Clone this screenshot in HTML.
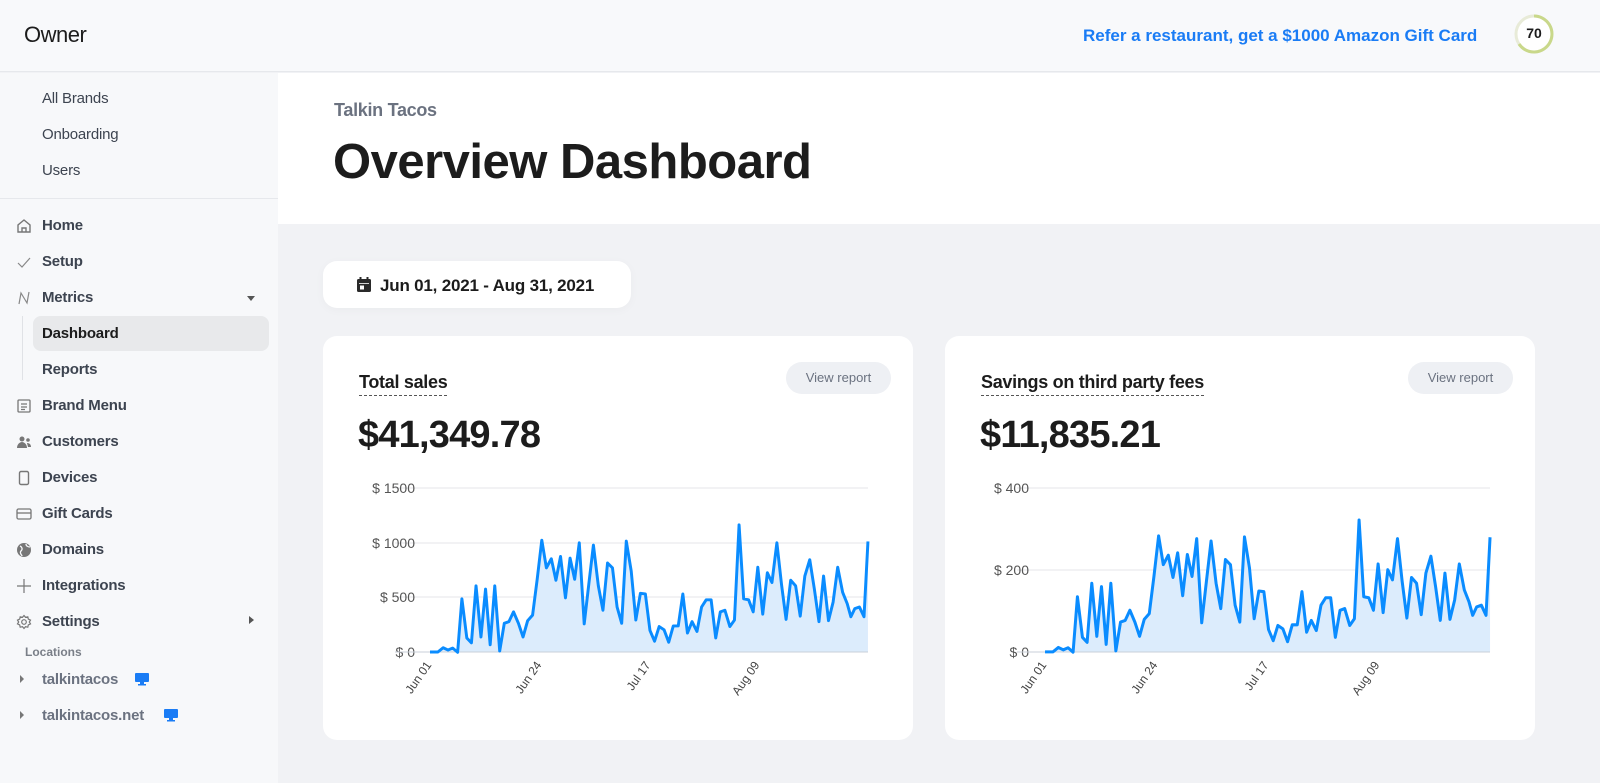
<!DOCTYPE html>
<html><head><meta charset="utf-8"><style>
*{margin:0;padding:0;box-sizing:border-box}
body{width:1600px;height:783px;background:#f1f2f5;font-family:"Liberation Sans",sans-serif;position:relative;overflow:hidden;color:#1c1c1c}
.a{position:absolute;white-space:nowrap}
.nav{position:absolute;left:42px;font-size:15px;color:#3d4450;font-weight:bold;letter-spacing:-0.2px}
.ic{position:absolute;left:16px;width:16px;height:16px}
.card{position:absolute;top:336px;width:590px;height:404px;background:#fff;border-radius:14px}
.vr{position:absolute;top:26px;right:22px;width:105px;height:32px;border-radius:16px;background:#eef0f4;color:#6b7280;font-size:13px;line-height:32px;text-align:center}
.ct{position:absolute;left:36px;top:36px;font-size:18px;font-weight:bold;border-bottom:1px dashed #555;padding-bottom:2px;letter-spacing:-0.3px}
.big{position:absolute;left:35px;top:78px;font-size:38px;font-weight:bold;letter-spacing:-0.8px}
</style></head><body>
<div class="a" style="left:0;top:0;width:1600px;height:72px;background:#f8f9fb;border-bottom:1px solid #e6e8ec"></div>
<div class="a" style="left:24px;top:22px;font-size:22px;color:#1c1c1c;letter-spacing:-0.5px">Owner</div>
<div class="a" style="left:1083px;top:26px;font-size:17px;font-weight:bold;color:#1a7cf5">Refer a restaurant, get a $1000 Amazon Gift Card</div>
<svg class="a" style="left:1513px;top:13px" width="42" height="42"><circle cx="21" cy="21" r="18" fill="#fff" stroke="#e8ebd8" stroke-width="3"/><path d="M21 3 A18 18 0 1 1 6 31" fill="none" stroke="#c9d88a" stroke-width="3"/></svg>
<div class="a" style="left:1513px;top:25px;width:42px;text-align:center;font-size:14px;font-weight:bold">70</div>

<div class="a" style="left:0;top:73px;width:278px;height:710px;background:#f7f8fa"></div>
<div class="a" style="left:0;top:198px;width:278px;height:1px;background:#e6e8ec"></div>
<div class="nav" style="top:90px;font-weight:normal;color:#3d4450">All Brands</div>
<div class="nav" style="top:126px;font-weight:normal">Onboarding</div>
<div class="nav" style="top:162px;font-weight:normal">Users</div>

<svg class="ic" style="top:218px" viewBox="0 0 16 16" fill="none" stroke="#777" stroke-width="1.4"><path d="M2 14V7L8 2l6 5v7z M6 14v-4h4v4"/></svg>
<div class="nav" style="top:217px">Home</div>
<svg class="ic" style="top:254px" viewBox="0 0 16 16" fill="none" stroke="#888" stroke-width="1.2"><path d="M2 9l4 4 8-9"/></svg>
<div class="nav" style="top:253px">Setup</div>
<svg class="ic" style="top:290px" viewBox="0 0 16 16" fill="none" stroke="#888" stroke-width="1.2"><path d="M3 14L5 3l6 10 2-11"/></svg>
<div class="nav" style="top:289px">Metrics</div>
<div class="a" style="left:247px;top:296px;border:4px solid transparent;border-top:5px solid #555"></div>
<div class="a" style="left:22px;top:316px;width:1px;height:64px;background:#e0e2e6"></div>
<div class="a" style="left:33px;top:316px;width:236px;height:35px;background:#e8e9eb;border-radius:8px"></div>
<div class="nav" style="top:325px;color:#1c1c1c">Dashboard</div>
<div class="nav" style="top:361px">Reports</div>
<svg class="ic" style="top:398px" viewBox="0 0 16 16" fill="none" stroke="#777" stroke-width="1.3"><rect x="2" y="2" width="12" height="12" rx="1"/><path d="M5 6h6M5 9h6M5 11.5h4"/></svg>
<div class="nav" style="top:397px">Brand Menu</div>
<svg class="ic" style="top:434px" viewBox="0 0 16 16" fill="#777"><circle cx="6" cy="5" r="2.5"/><circle cx="12" cy="6" r="1.8"/><path d="M1 14c0-4 3-6 5-6s5 2 5 6z M11 9c2 0 4 1 4 4h-3z"/></svg>
<div class="nav" style="top:433px">Customers</div>
<svg class="ic" style="top:470px" viewBox="0 0 16 16" fill="none" stroke="#777" stroke-width="1.4"><rect x="3.5" y="1.5" width="9" height="13" rx="1.5"/></svg>
<div class="nav" style="top:469px">Devices</div>
<svg class="ic" style="top:506px" viewBox="0 0 16 16" fill="none" stroke="#777" stroke-width="1.3"><rect x="1" y="3" width="14" height="10" rx="1.5"/><path d="M1 7h14"/></svg>
<div class="nav" style="top:505px">Gift Cards</div>
<svg class="ic" style="top:542px" viewBox="0 0 16 16"><circle cx="8" cy="8" r="7" fill="#777"/><path d="M4 4c2 1 3 3 1 5s1 4 1 5M10 2c0 2 2 3 4 3" stroke="#f7f8fa" stroke-width="1.3" fill="none"/></svg>
<div class="nav" style="top:541px">Domains</div>
<svg class="ic" style="top:578px" viewBox="0 0 16 16" stroke="#777" stroke-width="1.2"><path d="M8 1v14M1 8h14"/></svg>
<div class="nav" style="top:577px">Integrations</div>
<svg class="ic" style="top:614px" viewBox="0 0 16 16" fill="none" stroke="#777" stroke-width="1.2"><circle cx="8" cy="8" r="2.3"/><path d="M8 1.5l1.5 1.8 2.3-.5.5 2.3 2.2 1L13.3 8l1.2 1.9-2.2 1-.5 2.3-2.3-.5L8 14.5l-1.5-1.8-2.3.5-.5-2.3-2.2-1L2.7 8 1.5 6.1l2.2-1 .5-2.3 2.3.5z"/></svg>
<div class="nav" style="top:613px">Settings</div>
<div class="a" style="left:249px;top:616px;border:4px solid transparent;border-left:5px solid #555"></div>
<div class="a" style="left:25px;top:645px;font-size:12px;color:#7a7f88;font-weight:bold">Locations</div>
<div class="a" style="left:20px;top:675px;border:4px solid transparent;border-left:4px solid #777"></div>
<div class="nav" style="top:671px;color:#6b7280">talkintacos</div>
<svg class="a" style="left:135px;top:673px" width="14" height="13" viewBox="0 0 14 13" fill="#1a7cf5"><rect x="0" y="0" width="14" height="9" rx="1"/><rect x="5" y="9" width="4" height="2"/><rect x="3" y="11" width="8" height="1.5"/></svg>
<div class="a" style="left:20px;top:711px;border:4px solid transparent;border-left:4px solid #777"></div>
<div class="nav" style="top:707px;color:#6b7280">talkintacos.net</div>
<svg class="a" style="left:164px;top:709px" width="14" height="13" viewBox="0 0 14 13" fill="#1a7cf5"><rect x="0" y="0" width="14" height="9" rx="1"/><rect x="5" y="9" width="4" height="2"/><rect x="3" y="11" width="8" height="1.5"/></svg>

<div class="a" style="left:278px;top:73px;width:1322px;height:151px;background:#fff"></div>
<div class="a" style="left:334px;top:100px;font-size:18px;color:#6b7280;font-weight:bold;letter-spacing:-0.3px">Talkin Tacos</div>
<div class="a" style="left:333px;top:134px;font-size:49px;font-weight:bold;color:#1c1c1c;letter-spacing:-0.5px">Overview Dashboard</div>

<div class="a" style="left:323px;top:261px;width:308px;height:47px;background:#fff;border-radius:14px;box-shadow:0 2px 10px rgba(0,0,0,0.03)"></div>
<svg class="a" style="left:357px;top:277px" width="14" height="15" viewBox="0 0 14 15" fill="#2a2a2a"><rect x="0" y="2" width="14" height="13" rx="1.5"/><rect x="2.5" y="0" width="2" height="4"/><rect x="9.5" y="0" width="2" height="4"/><rect x="2" y="6" width="10" height="0.8" fill="#fff"/><rect x="3" y="8.5" width="4" height="4" fill="#fff"/></svg>
<div class="a" style="left:380px;top:276px;font-size:17px;font-weight:bold;letter-spacing:-0.2px">Jun 01, 2021 - Aug 31, 2021</div>

<div class="card" style="left:323px"><div class="ct">Total sales</div><div class="vr">View report</div><div class="big">$41,349.78</div></div>
<div class="card" style="left:945px"><div class="ct">Savings on third party fees</div><div class="vr">View report</div><div class="big">$11,835.21</div></div>

<svg class="a" style="left:0;top:0" width="1600" height="783" font-family="Liberation Sans" font-size="14" fill="#555">
<defs>
<polyline id="ln" fill="none" stroke="#0a8cff" stroke-width="9" stroke-linejoin="round" points="288,588 312,588 328,575 343,582 357,576 372,589 385,425 400,545 414,560 428,385 443,542 457,395 471,566 485,385 500,585 514,500 528,495 542,465 557,500 571,542 585,492 600,475 614,365 628,245 642,330 657,302 671,368 685,295 700,422 714,300 728,365 742,253 757,502 771,380 785,260 800,385 814,460 828,315 843,330 857,450 871,500 885,248 900,340 914,490 928,408 943,410 957,522 971,555 985,510 1000,520 1014,558 1028,508 1043,508 1057,410 1071,530 1085,495 1100,525 1114,450 1128,428 1143,428 1157,545 1171,465 1185,460 1200,510 1214,490 1228,198 1242,425 1257,428 1271,465 1285,328 1300,472 1314,345 1328,375 1343,253 1357,380 1371,488 1385,368 1400,385 1414,478 1428,355 1443,305 1457,395 1471,495 1485,355 1500,492 1514,435 1528,328 1543,405 1557,440 1568,480 1580,455 1594,450 1608,480 1620,249"/>
<polygon id="ar" fill="#dcecfc" points="288,588 312,588 328,575 343,582 357,576 372,589 385,425 400,545 414,560 428,385 443,542 457,395 471,566 485,385 500,585 514,500 528,495 542,465 557,500 571,542 585,492 600,475 614,365 628,245 642,330 657,302 671,368 685,295 700,422 714,300 728,365 742,253 757,502 771,380 785,260 800,385 814,460 828,315 843,330 857,450 871,500 885,248 900,340 914,490 928,408 943,410 957,522 971,555 985,510 1000,520 1014,558 1028,508 1043,508 1057,410 1071,530 1085,495 1100,525 1114,450 1128,428 1143,428 1157,545 1171,465 1185,460 1200,510 1214,490 1228,198 1242,425 1257,428 1271,465 1285,328 1300,472 1314,345 1328,375 1343,253 1357,380 1371,488 1385,368 1400,385 1414,478 1428,355 1443,305 1457,395 1471,495 1485,355 1500,492 1514,435 1528,328 1543,405 1557,440 1568,480 1580,455 1594,450 1608,480 1620,249 1620,588"/>
</defs>
<g stroke="#e4e6ea" stroke-width="1"><path d="M395 488H868M395 543H868M395 597H868M1017 488H1490M1017 570H1490"/></g>
<g text-anchor="end"><text x="415" y="493">$ 1500</text><text x="415" y="548">$ 1000</text><text x="415" y="602">$ 500</text><text x="415" y="657">$ 0</text>
<text x="1029" y="493">$ 400</text><text x="1029" y="575">$ 200</text><text x="1029" y="657">$ 0</text></g>
<g transform="translate(335.3,460.3) scale(0.3288,0.326)"><use href="#ar"/></g>
<g transform="translate(948.8,453.1) scale(0.3341,0.338)"><use href="#ar"/></g>
<path d="M395 652H868M1017 652H1490" stroke="#c9cfd8"/>
<g transform="translate(335.3,460.3) scale(0.3288,0.326)"><use href="#ln"/></g>
<g transform="translate(948.8,453.1) scale(0.3341,0.338)"><use href="#ln"/></g>
<g font-size="12" fill="#444" text-anchor="end">
<text transform="translate(432,665) rotate(-55)">Jun 01</text><text transform="translate(542,665) rotate(-55)">Jun 24</text><text transform="translate(651,665) rotate(-55)">Jul 17</text><text transform="translate(760,665) rotate(-55)">Aug 09</text>
<text transform="translate(1047,665) rotate(-55)">Jun 01</text><text transform="translate(1158,665) rotate(-55)">Jun 24</text><text transform="translate(1269,665) rotate(-55)">Jul 17</text><text transform="translate(1380,665) rotate(-55)">Aug 09</text></g>
</svg>
</body></html>
